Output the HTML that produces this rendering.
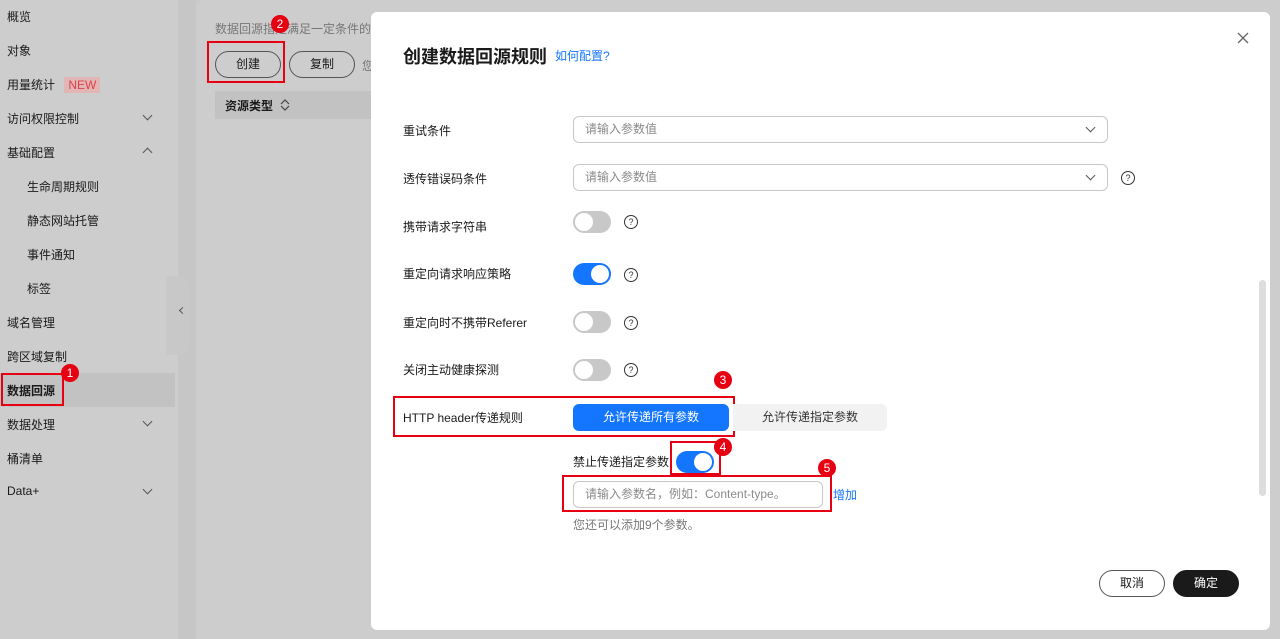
<!DOCTYPE html>
<html><head><meta charset="utf-8"><style>
*{box-sizing:border-box;margin:0;padding:0}
body{width:1280px;height:639px;overflow:hidden;background:#cbcbcb;font-family:"Liberation Sans","Noto Sans CJK SC",sans-serif;font-size:12px;color:#1a1a1a;position:relative}
.abs{position:absolute}
.side{left:0;top:0;width:178px;height:639px;background:#cdcdcd}
.gap{left:178px;top:0;width:18px;height:639px;background:#c6c6c6}
.card{left:196px;top:0;width:1084px;height:639px;background:#cdcdcd;border-radius:10px 0 0 0}
.nav{position:absolute;left:7px;font-size:12px;color:#1a1a1a}
.sub{left:27px}
.chev{position:absolute;left:144px;width:7px;height:7px;border-right:1px solid #555;border-bottom:1px solid #555;transform:rotate(45deg)}
.up{transform:rotate(-135deg)}
.red{border:2px solid #e60012}
.badge{position:absolute;width:18px;height:18px;border-radius:50%;background:#e60012;color:#fff;font-size:12px;text-align:center;line-height:18px}
.modal{left:371px;top:12px;width:899px;height:618px;background:#fff;border-radius:6px}
.lbl{position:absolute;left:403px;font-size:12px;color:#1a1a1a}
.sel{position:absolute;left:573px;width:535px;height:27px;border:1px solid #c8c8c8;border-radius:6px;color:#8a8a8a;padding-left:11px;line-height:25px}
.sel:after{content:"";position:absolute;right:13px;top:7px;width:6px;height:6px;border-right:1px solid #555;border-bottom:1px solid #555;transform:rotate(45deg)}
.q{position:absolute;width:14px;height:14px;border:1px solid #333;border-radius:50%;font-size:9px;text-align:center;line-height:12px;color:#333}
.sw{position:absolute;left:573px;width:38px;height:22px;border-radius:11px;background:#c8c8c8}
.sw:after{content:"";position:absolute;left:2px;top:2px;width:18px;height:18px;border-radius:50%;background:#fff}
.sw.on{background:#1476ff}
.sw.on:after{left:18px}
.btn{position:absolute;height:27px;border:1px solid #555;border-radius:14px;text-align:center;line-height:25px;font-size:12px}
</style></head><body>
<div class="abs side"></div>
<div class="abs gap"></div>
<div class="abs card"></div>
<div class="abs" style="left:0;top:373px;width:175px;height:34px;background:#c2c2c2"></div>
<div class="abs" style="left:166px;top:276px;width:23px;height:79px;background:#c8c8c8;border-radius:0 10px 10px 0"></div>
<div class="abs" style="left:180px;top:308px;width:5px;height:5px;border-left:1px solid #555;border-bottom:1px solid #555;transform:rotate(45deg)"></div>

<div class="nav" style="top:8px">概览</div>
<div class="nav" style="top:42px">对象</div>
<div class="nav" style="top:76px">用量统计 <span style="background:#e3b6b6;color:#e0404a;padding:1px 4px;margin-left:6px">NEW</span></div>
<div class="nav" style="top:110px">访问权限控制</div><div class="chev" style="top:112px"></div>
<div class="nav" style="top:144px">基础配置</div><div class="chev up" style="top:149px"></div>
<div class="nav sub" style="top:178px">生命周期规则</div>
<div class="nav sub" style="top:212px">静态网站托管</div>
<div class="nav sub" style="top:246px">事件通知</div>
<div class="nav sub" style="top:280px">标签</div>
<div class="nav" style="top:314px">域名管理</div>
<div class="nav" style="top:348px">跨区域复制</div>
<div class="nav" style="top:382px;font-weight:bold">数据回源</div>
<div class="abs red" style="left:1px;top:373px;width:63px;height:33px"></div>
<div class="badge" style="left:61px;top:364px">1</div>
<div class="nav" style="top:416px">数据处理</div><div class="chev" style="top:418px"></div>
<div class="nav" style="top:450px">桶清单</div>
<div class="nav" style="top:484px">Data+</div><div class="chev" style="top:486px"></div>

<div class="abs" style="left:215px;top:20px;color:#777">数据回源指定满足一定条件的</div>
<div class="badge" style="left:271px;top:15px">2</div>
<div class="btn" style="left:215px;top:51px;width:66px">创建</div>
<div class="abs red" style="left:207px;top:41px;width:78px;height:42px"></div>
<div class="btn" style="left:289px;top:51px;width:66px">复制</div>
<div class="abs" style="left:362px;top:57px;color:#777">您</div>
<div class="abs" style="left:215px;top:91px;width:160px;height:28px;background:#c2c2c2"></div>
<div class="abs" style="left:225px;top:97px;font-weight:bold">资源类型</div>
<svg class="abs" style="left:279px;top:98px" width="12" height="14" viewBox="0 0 12 14"><path d="M2 6 L6 2 L10 6 M2 8 L6 12 L10 8" fill="none" stroke="#444" stroke-width="1.2"/></svg>

<div class="abs modal"></div>
<div class="abs" style="left:403px;top:43px;font-size:18px;font-weight:bold">创建数据回源规则</div>
<div class="abs" style="left:555px;top:47px;color:#1476ff">如何配置?</div>
<svg class="abs" style="left:1237px;top:32px" width="12" height="12" viewBox="0 0 12 12"><path d="M1 1 L11 11 M11 1 L1 11" stroke="#666" stroke-width="1.3"/></svg>
<div class="abs" style="left:1259px;top:280px;width:7px;height:216px;background:#ddd;border-radius:4px"></div>

<div class="lbl" style="top:122px">重试条件</div>
<div class="sel" style="top:116px">请输入参数值</div>
<div class="lbl" style="top:170px">透传错误码条件</div>
<div class="sel" style="top:164px">请输入参数值</div>
<div class="q" style="left:1121px;top:171px">?</div>
<div class="lbl" style="top:218px">携带请求字符串</div>
<div class="sw" style="top:211px"></div><div class="q" style="left:624px;top:215px">?</div>
<div class="lbl" style="top:265px">重定向请求响应策略</div>
<div class="sw on" style="top:263px"></div><div class="q" style="left:624px;top:268px">?</div>
<div class="lbl" style="top:314px">重定向时不携带Referer</div>
<div class="sw" style="top:311px"></div><div class="q" style="left:624px;top:316px">?</div>
<div class="lbl" style="top:361px">关闭主动健康探测</div>
<div class="sw" style="top:359px"></div><div class="q" style="left:624px;top:363px">?</div>

<div class="badge" style="left:714px;top:371px">3</div>
<div class="abs red" style="left:393px;top:396px;width:342px;height:41px"></div>
<div class="lbl" style="top:409px">HTTP header传递规则</div>
<div class="abs" style="left:573px;top:404px;width:156px;height:27px;background:#1476ff;border-radius:6px;color:#fff;text-align:center;line-height:27px">允许传递所有参数</div>
<div class="abs" style="left:733px;top:404px;width:154px;height:27px;background:#f2f2f2;border-radius:0 6px 6px 0;color:#333;text-align:center;line-height:27px">允许传递指定参数</div>

<div class="abs" style="left:573px;top:453px">禁止传递指定参数</div>
<div class="sw on" style="left:676px;top:451px"></div>
<div class="abs red" style="left:670px;top:441px;width:51px;height:34px"></div>
<div class="badge" style="left:714px;top:438px">4</div>
<div class="badge" style="left:818px;top:459px">5</div>
<div class="abs red" style="left:562px;top:475px;width:270px;height:37px"></div>
<div class="abs" style="left:573px;top:481px;width:250px;height:27px;border:1px solid #c8c8c8;border-radius:6px;color:#8a8a8a;padding-left:11px;line-height:25px">请输入参数名，例如：Content-type。</div>
<div class="abs" style="left:833px;top:486px;color:#1476ff">增加</div>
<div class="abs" style="left:573px;top:516px;color:#777">您还可以添加9个参数。</div>

<div class="btn" style="left:1099px;top:570px;width:66px">取消</div>
<div class="btn" style="left:1173px;top:570px;width:66px;background:#1a1a1a;border-color:#1a1a1a;color:#fff">确定</div>
</body></html>
